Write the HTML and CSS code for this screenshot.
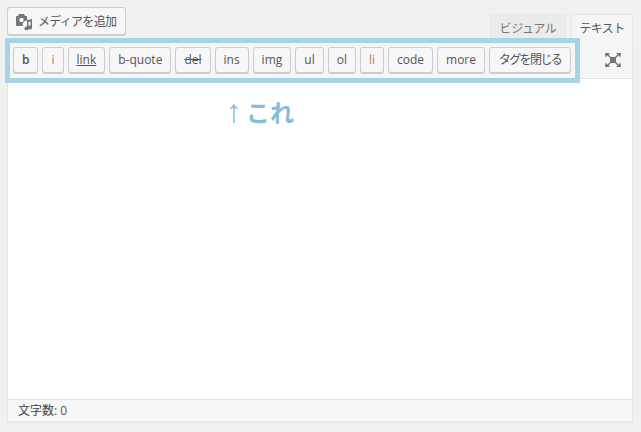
FILE: index.html
```html
<!DOCTYPE html>
<html lang="ja">
<head>
<meta charset="utf-8">
<title>エディタ</title>
<link rel="stylesheet" href="styles.css">
</head>
<body>
<div class="wrap">
  <div class="head">
    <button class="media">
      <svg class="media-icon" width="18" height="18" viewBox="0 0 18 18">
        <path fill="#72777c" d="M4 2h5l1 2h2v4.500a4 4 0 0 0-4 5.500H2a1 1 0 0 1-1-1V5a1 1 0 0 1 1-1h1z"/>
        <circle cx="6.500" cy="8" r="2.200" fill="#f7f7f7"/>
        <path fill="#72777c" d="M12 8l5-1v8.500a2 2 0 1 1-1.500-1.900V9.500l-2 .4v6.600a2 2 0 1 1-1.500-1.900z"/>
      </svg>
      <span>メディアを追加</span>
    </button>
    <div class="tabs">
      <div class="tab">ビジュアル</div>
      <div class="tab active">テキスト</div>
    </div>
  </div>
  <div class="editor">
    <div class="toolbar">
      <div class="btns">
        <button class="qt bold">b</button>
        <button class="qt orange">i</button>
        <button class="qt under">link</button>
        <button class="qt">b-quote</button>
        <button class="qt strike">del</button>
        <button class="qt">ins</button>
        <button class="qt">img</button>
        <button class="qt">ul</button>
        <button class="qt">ol</button>
        <button class="qt orange">li</button>
        <button class="qt">code</button>
        <button class="qt">more</button>
        <button class="qt jp">タグを閉じる</button>
      </div>
      <svg class="full" width="18" height="16" viewBox="0 0 18 16">
        <path fill="#72777c" d="M6 5h6v6H6z"/>
        <path fill="#72777c" d="M1 1h5L4.500 2.500 7 5 6 6 3.500 3.500 1.500 5.500zM17 1h-5l1.500 1.500L11 5l1 1 2.500-2.500 2 2zM1 15h5l-1.500-1.500L7 11l-1-1-2.500 2.500-2-2zM17 15h-5l1.500-1.500L11 11l1-1 2.500 2.500 2-2z"/>
      </svg>
    </div>
    <div class="content"></div>
    <div class="status">文字数: <span class="count">0</span></div>
  </div>
  <div class="highlight"></div>
  <div class="note"><span class="arrow">↑</span>これ</div>
</div>
</body>
</html>
```
FILE: styles.css
```css
* { box-sizing: border-box; }
html, body { margin: 0; height: 100%; }
body {
  background: #f1f1f1;
  font-family: "Open Sans", "Noto Sans CJK JP", sans-serif;
  color: #444;
  overflow: hidden;
}
button { font-family: inherit; margin: 0; }
.wrap {
  position: relative;
  width: 641px;
  height: 432px;
  padding: 7px 8px 0 7px;
}
.head {
  display: flex;
  justify-content: space-between;
  align-items: flex-end;
  height: 34px;
}
.media {
  align-self: flex-start;
  display: flex;
  align-items: center;
  gap: 5px;
  width: 119px;
  height: 28px;
  padding: 0 7px;
  border: 1px solid #ccc;
  border-radius: 3px;
  background: #f7f7f7;
  box-shadow: 0 1px 0 #ccc;
  font-size: 12px;
  letter-spacing: -0.7px;
  color: #555;
  white-space: nowrap;
}
.media-icon { flex: none; }
.tabs {
  display: flex;
  gap: 5px;
  position: relative;
  top: 1px;
}
.tab {
  height: 28px;
  border: 1px solid #e6e6e6;
  background: #ebebeb;
  color: #777;
  font-size: 12px;
  letter-spacing: -0.4px;
  line-height: 27px;
  width: 76px;
  text-align: center;
  white-space: nowrap;
}
.tab.active {
  width: 62px;
  background: #f5f5f5;
  border-bottom-color: #f5f5f5;
  letter-spacing: -0.6px;
  color: #555;
}
.editor {
  border: 1px solid #e5e5e5;
  border-top-width: 0;
  height: 381px;
  display: flex;
  flex-direction: column;
  box-shadow: 0 1px 1px rgba(0,0,0,.04);
}
.toolbar {
  height: 38px;
  flex: none;
  display: flex;
  align-items: center;
  justify-content: space-between;
  padding: 0 10px 0 5px;
  background: #f5f5f5;
  border-top: 1px solid #e5e5e5;
  border-bottom: 1px solid #e5e5e5;
}
.btns { display: flex; gap: 4px; }
.qt {
  height: 26px;
  padding: 0 8px;
  border: 1px solid #ccc;
  border-radius: 3px;
  background: #f7f7f7;
  box-shadow: 0 1px 0 #ccc;
  font-size: 12px;
  line-height: 22px;
  color: #555;
  white-space: nowrap;
}
.qt.bold { font-weight: 600; }
.qt.orange { color: #a9825c; }
.qt.under { text-decoration: underline; }
.qt.strike { text-decoration: line-through; }
.qt.jp { width: 82px; padding: 0; letter-spacing: -1.6px; }
.content { flex: 1; background: #fff; }
.status {
  height: 22px;
  flex: none;
  padding: 0 10px;
  background: #f7f7f7;
  border-top: 1px solid #e5e5e5;
  font-size: 12px;
  line-height: 21px;
  color: #444;
}
.count { color: #555; }
.highlight {
  position: absolute;
  left: 5px;
  top: 38px;
  width: 575px;
  height: 45px;
  border: 5px solid #a8d2e8;
  pointer-events: none;
}
.note {
  position: absolute;
  left: 226px;
  top: 93px;
  font-family: "Noto Sans CJK JP", sans-serif;
  font-size: 24px;
  font-weight: 700;
  line-height: 38px;
  color: #86bddc;
  white-space: nowrap;
}
.arrow {
  font-family: "Liberation Sans", sans-serif;
  font-size: 32px;
  font-weight: 700;
  line-height: 30px;
  margin-right: 4px;
}
```
